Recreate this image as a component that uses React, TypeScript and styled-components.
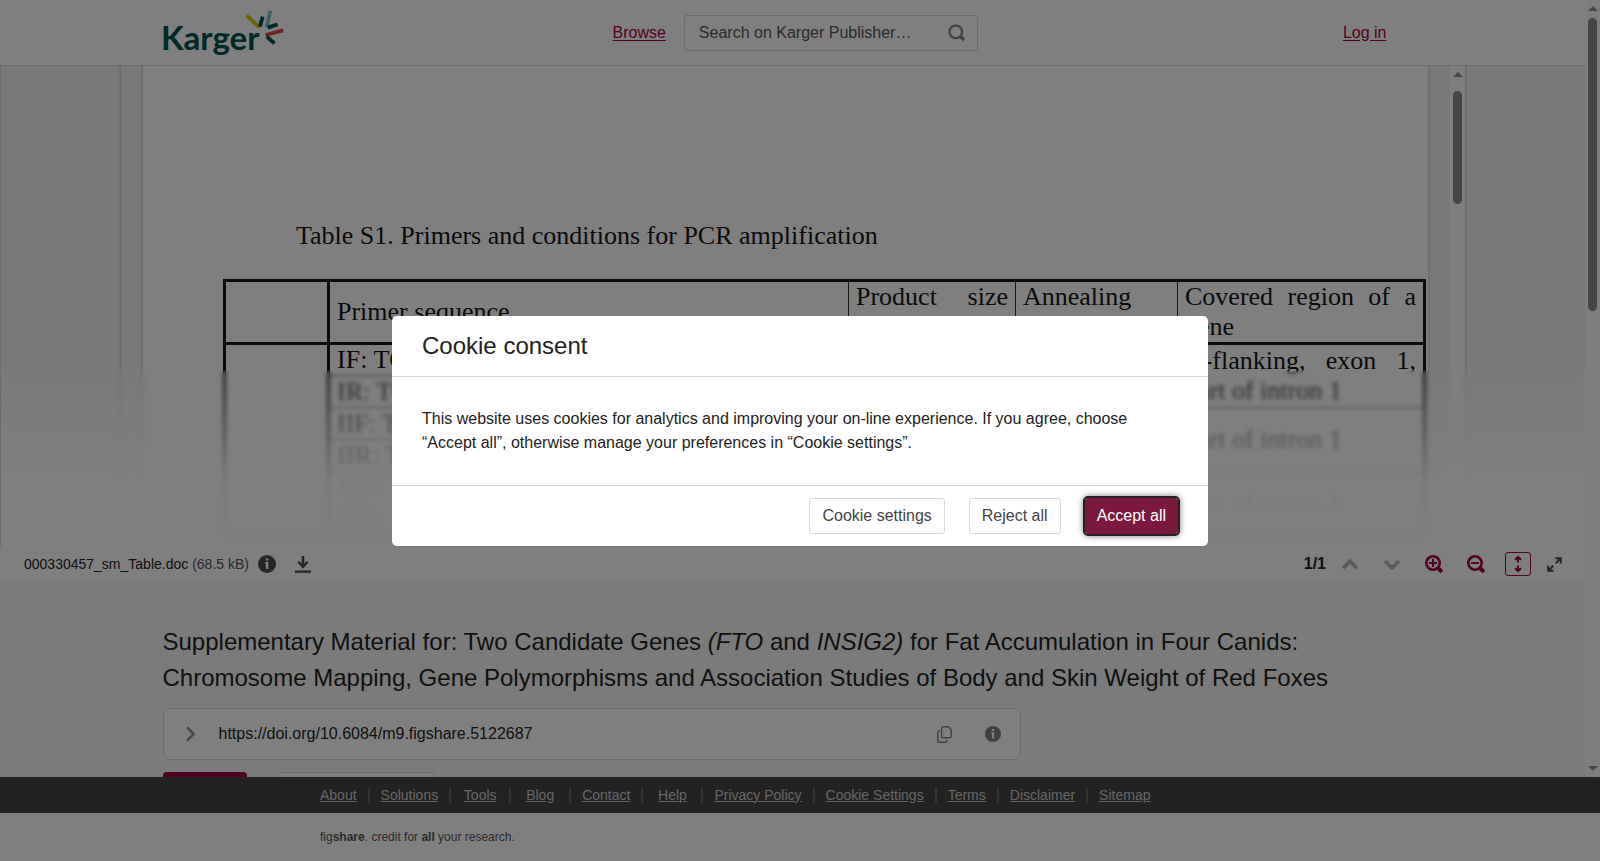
import React from "react";
import styled, { createGlobalStyle, css } from "styled-components";

const accent = "#a80044";

const GlobalStyle = createGlobalStyle`
  *, *::before, *::after { box-sizing: border-box; }
  body {
    margin: 0;
    background: #fff;
    color: #222;
    font: 16px/24px "Liberation Sans", Arial, sans-serif;
  }
  button, input { font: inherit; }
`;

const Page = styled.div`
  display: flex;
  flex-direction: column;
  height: 100vh;
  overflow: hidden;
`;

const ScrollRegion = styled.div`
  display: flex;
  flex: 1;
  min-height: 0;
`;

const Content = styled.div`
  flex: 1;
  min-width: 0;
  overflow: hidden;
  background: #f7f7f7;
`;

/* ---------- scrollbars ---------- */

const Track = styled.div<{ $gap: number }>`
  display: flex;
  flex-direction: column;
  align-items: center;
  gap: ${(p) => p.$gap}px;
  width: 15px;
  flex: none;
  padding: 6px 0;
  background: #fcfcfc;
`;

const Thumb = styled.div<{ $length: number }>`
  width: 9px;
  height: ${(p) => p.$length}px;
  border-radius: 5px;
  background: #8a8a8a;
`;

const Arrow = styled.div<{ $down?: boolean }>`
  border: 5px solid transparent;
  ${(p) =>
    p.$down
      ? css`
          margin-top: auto;
          border-top-color: #8a8a8a;
          border-bottom-width: 0;
        `
      : css`
          border-bottom-color: #8a8a8a;
          border-top-width: 0;
        `}
`;

function Scrollbar({ gap, length }: { gap: number; length: number }) {
  return (
    <Track $gap={gap} aria-hidden="true">
      <Arrow />
      <Thumb $length={length} />
      <Arrow $down />
    </Track>
  );
}

/* ---------- header ---------- */

const Header = styled.header`
  height: 66px;
  background: #fff;
  border-bottom: 1px solid #d8d8d8;
`;

const HeaderInner = styled.div`
  display: grid;
  grid-template-columns: 450px auto 1fr;
  align-items: center;
  max-width: 1260px;
  height: 65px;
  margin: 0 auto;
  padding-right: 36px;
`;

const HeaderMiddle = styled.div`
  display: flex;
  align-items: center;
  gap: 18px;
`;

const TextLink = styled.a`
  color: ${accent};
  text-underline-offset: 2px;
`;

const LoginLink = styled(TextLink)`
  justify-self: end;
`;

const SearchBox = styled.form`
  display: flex;
  align-items: center;
  width: 294px;
  height: 36px;
  padding: 0 12px 0 14px;
  border: 1px solid #d8d8d8;
  border-radius: 3px;
`;

const SearchInput = styled.input`
  flex: 1;
  min-width: 0;
  padding: 0;
  border: 0;
  outline: 0;
  background: none;
  color: #222;
  &::placeholder {
    color: #555;
    opacity: 1;
  }
`;

const IconButton = styled.button<{ $color?: string }>`
  display: flex;
  padding: 0;
  border: 0;
  background: none;
  color: ${(p) => p.$color ?? "#4a4a4a"};
`;

const LogoDrawing = styled.svg`
  overflow: visible;
`;

const LogoText = styled.text`
  font: 700 33px Lato, sans-serif;
  fill: #00544f;
`;

function Logo() {
  return (
    <LogoDrawing width="122" height="50" viewBox="0 0 122 50" role="img" aria-label="Karger">
      <LogoText x="-2" y="42">Karger</LogoText>
      <g fill="none" strokeWidth="3.8">
        <path stroke="#d9c800" d="M83.6 7.6 96.4 19.4" />
        <path stroke="#00544f" d="M99.8 8.6 96.8 18.6" />
        <path stroke="#82bac8" d="M107.2 2.800 103.800 19.400" />
        <path stroke="#00544f" d="M104.8 19.600 114.600 16.400" />
        <path stroke="#e0474c" d="M102.6 27 120.2 22.4" />
        <path stroke="#00544f" d="M103.800 28.600 111.400 35.400" />
      </g>
    </LogoDrawing>
  );
}

function SearchIcon() {
  return (
    <svg width="17" height="17" viewBox="0 0 17 17" fill="none" stroke="#808080" strokeWidth="2.2">
      <circle cx="7.8" cy="7.8" r="6.3" />
      <path d="m12 12 4 4" strokeWidth="3.2" />
    </svg>
  );
}

/* ---------- document viewer ---------- */

const Viewer = styled.section`
  position: relative;
  height: 480px;
  overflow: hidden;
  padding: 0 120px;
  border-left: 1px solid #d8d8d8;
  background: #f3f3f3;
`;

const Frame = styled.div`
  display: flex;
  height: 100%;
  box-shadow: 0 0 3px rgba(0, 0, 0, 0.3);
`;

const Sheet = styled.article`
  flex: 1;
  min-width: 0;
  margin: 0 22px;
  padding: 155px 0 0 80px;
  background: #fff;
  box-shadow: 0 0 3px rgba(0, 0, 0, 0.3);
  color: #151515;
  font: 26px/30px "Liberation Serif", "Times New Roman", serif;
`;

const Caption = styled.p`
  margin: 0 0 28px 73px;
`;

const Primers = styled.table`
  width: 1200px;
  border: 3px solid #151515;
  border-collapse: collapse;
  table-layout: fixed;
`;

const Cell = styled.td<{ $heavyTop?: boolean; $heavyLeft?: boolean; $heavyRight?: boolean }>`
  height: 32px;
  padding: 0 7px;
  border: 1px solid #333;
  ${(p) => p.$heavyTop && "border-top: 3px solid #151515;"}
  ${(p) => p.$heavyLeft && "border-left: 3px solid #151515;"}
  ${(p) => p.$heavyRight && "border-right: 3px solid #151515;"}
  text-align: justify;
`;

const HeadCell = styled(Cell).attrs({ as: "th", scope: "col" })`
  height: 60px;
  font-weight: 400;
`;

const Fade = styled.div`
  position: absolute;
  left: 0;
  right: 0;
  bottom: 0;
  height: 175px;
  backdrop-filter: blur(2px);
  background: linear-gradient(rgba(255, 255, 255, 0.1), rgba(255, 255, 255, 0.94) 65%, rgba(255, 255, 255, 0.98));
`;

const pairs = ["I", "II", "III"];

function DocumentTable() {
  return (
    <Primers>
      <colgroup>
        <col width="104" />
        <col width="520" />
        <col width="167" />
        <col width="162" />
        <col width="247" />
      </colgroup>
      <thead>
        <tr>
          <HeadCell />
          <HeadCell $heavyLeft>Primer sequence</HeadCell>
          <HeadCell>Product size (bp)</HeadCell>
          <HeadCell>Annealing temp.</HeadCell>
          <HeadCell>Covered region of a gene</HeadCell>
        </tr>
      </thead>
      <tbody>
        {pairs.map((n, i) => (
          <React.Fragment key={n}>
            <tr>
              {i === 0 && <Cell rowSpan={6} $heavyTop $heavyRight />}
              <Cell $heavyTop={i === 0}>{n}F: TCG</Cell>
              <Cell rowSpan={2} $heavyTop={i === 0} />
              <Cell rowSpan={2} $heavyTop={i === 0} />
              <Cell rowSpan={2} $heavyTop={i === 0}>
                {i === 0 ? "5′-flanking, exon 1, part of intron 1" : "part of intron 1"}
              </Cell>
            </tr>
            <tr>
              <Cell>{n}R: TCG</Cell>
            </tr>
          </React.Fragment>
        ))}
      </tbody>
    </Primers>
  );
}

/* ---------- viewer toolbar ---------- */

const Toolbar = styled.div`
  display: flex;
  align-items: center;
  justify-content: space-between;
  height: 36px;
  padding: 0 23px 0 24px;
  background: #fff;
`;

const FileInfo = styled.div`
  display: flex;
  align-items: center;
  font-size: 14px;
`;

const FileName = styled.span`
  margin-right: 9px;
`;

const FileSize = styled.span`
  color: #555;
`;

const FileActions = styled.div`
  display: flex;
  align-items: center;
  gap: 19px;
`;

const Pager = styled.div`
  display: flex;
  align-items: center;
  gap: 24px;
`;

const PageCount = styled.b`
  margin-right: -9px;
`;

const FitButton = styled(IconButton)`
  align-items: center;
  justify-content: center;
  width: 26px;
  height: 24px;
  margin-left: -4px;
  border: 1px solid ${accent};
  border-radius: 3px;
`;

const ExpandButton = styled(IconButton)`
  margin-left: -8px;
`;

function InfoIcon({ size, color }: { size: number; color: string }) {
  return (
    <svg width={size} height={size} viewBox="0 0 18 18">
      <circle cx="9" cy="9" r="9" fill={color} />
      <path fill="#fff" d="M7.8 3.4h2.6v2.2H7.8zM7 7h3.4v7H7.8V8.4H7z" />
    </svg>
  );
}

function DownloadIcon() {
  return (
    <svg width="16" height="18" viewBox="0 0 16 18" fill="currentColor">
      <path d="M6.700 1h2.600v7.600l2.600-2.600L13.600 7.600 8 13.800 2.400 7.600 4.100 6l2.600 2.600zM0 15.600h16v2.200H0z" />
    </svg>
  );
}

function ChevronIcon({ down }: { down?: boolean }) {
  return (
    <svg width="18" height="18" viewBox="0 0 18 18" fill="none" stroke="currentColor" strokeWidth="3.6">
      <path d={down ? "m2 6 7 7 7-7" : "m2 13.200 7-7 7 7"} />
    </svg>
  );
}

function ZoomIcon({ plus }: { plus?: boolean }) {
  return (
    <svg width="18" height="18" viewBox="0 0 18 18" fill="none" stroke="currentColor" strokeWidth="2.6">
      <circle cx="8" cy="8" r="6.700" />
      <path d="m13 13 4 4" strokeWidth="4" />
      <path d={plus ? "M4 8h8M8 4v8" : "M4 8h8"} strokeWidth="2" />
    </svg>
  );
}

function FitHeightIcon() {
  return (
    <svg width="8" height="18" viewBox="0 0 8 18" fill="none" stroke="currentColor" strokeWidth="2">
      <path d="M4 2v5.400M1 4.800l3-3 3 3M4 10.600V16M1 13.200l3 3 3-3" />
    </svg>
  );
}

function ExpandIcon() {
  return (
    <svg width="15" height="15" viewBox="0 0 15 15" fill="none" stroke="currentColor" strokeWidth="2">
      <path d="M8.400 1.200h5.400v5.400M13.400 1.600 8.800 6.200M6.600 13.800H1.200V8.400M1.600 13.400l4.600-4.600" />
    </svg>
  );
}

/* ---------- item details ---------- */

const Details = styled.main`
  max-width: 1260px;
  margin: 0 auto;
  padding-top: 42px;
`;

const Title = styled.h1`
  margin: 0 0 12px;
  font-size: 24px;
  line-height: 36px;
  font-weight: 400;
`;

const DoiBox = styled.div`
  display: flex;
  align-items: center;
  max-width: 858px;
  height: 52px;
  padding: 0 19px 0 20px;
  border: 1px solid #d8d8d8;
  border-radius: 6px;
  background: #fff;
`;

const DoiText = styled.span`
  flex: 1;
  margin-left: 21px;
`;

const DoiActions = styled.div`
  display: flex;
  align-items: center;
  gap: 33px;
`;

const ActionRow = styled.div`
  display: flex;
  gap: 30px;
  margin-top: 12px;
`;

const Button = styled.button<{ $width?: number; $primary?: boolean }>`
  height: 36px;
  ${(p) => p.$width && `width: ${p.$width}px;`}
  padding: 0 12px;
  border: 1px solid ${(p) => (p.$primary ? accent : "#d8d8d8")};
  border-radius: 3px;
  background: ${(p) => (p.$primary ? accent : "#fff")};
  color: ${(p) => (p.$primary ? "#fff" : "#444")};
  white-space: nowrap;
`;

const DownloadButton = styled(Button)`
  padding: 0 8px;
`;

function CaretIcon() {
  return (
    <svg width="14" height="18" viewBox="0 0 14 18" fill="none" stroke="currentColor" strokeWidth="2.4">
      <path d="m3 2.400 6.600 6.600L3 15.600" />
    </svg>
  );
}

function CopyIcon() {
  return (
    <svg width="15" height="17" viewBox="0 0 15 17" fill="none" stroke="currentColor" strokeWidth="1.400">
      <path d="M6.200.7h5L14.200 3.600v6.600q0 1.600-1.600 1.600H6.200q-1.600 0-1.600-1.600V2.300Q4.600.7 6.200.7z" />
      <path d="M3 4.600q-2.200 0-2.200 1.800v8q0 1.800 1.800 1.800h5.600q1.800 0 1.800-2.200" />
    </svg>
  );
}

/* ---------- footer ---------- */

const FooterBar = styled.nav`
  flex: none;
  background: #444;
`;

const FooterInner = styled.div`
  max-width: 960px;
  margin: 0 auto;
`;

const FooterLinks = styled.ul`
  display: flex;
  align-items: center;
  height: 36px;
  margin: 0;
  padding: 0;
  list-style: none;
  font-size: 14px;
  line-height: 15px;
`;

const FooterItem = styled.li`
  min-width: 60px;
  padding: 0 11px;
  text-align: center;
  white-space: nowrap;
  border-right: 2px solid #666;
  &:first-child {
    min-width: 0;
    padding-left: 0;
  }
  &:last-child {
    border-right: 0;
  }
`;

const FooterLink = styled.a`
  color: #ccc;
`;

const Credit = styled.footer`
  flex: none;
  height: 48px;
  background: #fff;
  color: #555;
  font-size: 12px;
  line-height: 48px;
`;

const footerLinks = [
  "About", "Solutions", "Tools", "Blog", "Contact", "Help",
  "Privacy Policy", "Cookie Settings", "Terms", "Disclaimer", "Sitemap",
];

/* ---------- cookie dialog ---------- */

const Backdrop = styled.div`
  position: fixed;
  inset: 0;
  display: flex;
  align-items: center;
  justify-content: center;
  background: rgba(0, 0, 0, 0.5);
`;

const Dialog = styled.div`
  width: 100%;
  max-width: 816px;
  border-radius: 5px;
  background: #fff;
`;

const DialogTitle = styled.h2`
  margin: 0;
  padding: 12px 30px;
  border-bottom: 1px solid #d8d8d8;
  font-size: 24px;
  line-height: 36px;
  font-weight: 400;
`;

const DialogBody = styled.p`
  margin: 0;
  padding: 30px;
`;

const DialogFooter = styled.div`
  display: flex;
  justify-content: flex-end;
  gap: 24px;
  padding: 12px 30px;
  border-top: 1px solid #d8d8d8;
`;

const AcceptButton = styled(Button)`
  padding: 0 11px;
  border-color: #7a183d;
  background: #7a183d;
  color: #fff;
  outline: 2px solid #222;
  outline-offset: 0;
  box-shadow: 0 0 6px 2px rgba(0, 0, 0, 0.5);
`;

export default function App() {
  return (
    <>
      <GlobalStyle />
      <Page>
        <ScrollRegion>
          <Content>
            <Header>
              <HeaderInner>
                <Logo />
                <HeaderMiddle>
                  <TextLink href="#browse">Browse</TextLink>
                  <SearchBox role="search">
                    <SearchInput aria-label="Search" placeholder="Search on Karger Publisher…" />
                    <IconButton type="submit" aria-label="Submit search">
                      <SearchIcon />
                    </IconButton>
                  </SearchBox>
                </HeaderMiddle>
                <LoginLink href="#login">Log in</LoginLink>
              </HeaderInner>
            </Header>

            <Viewer>
              <Frame>
                <Sheet>
                  <Caption>Table S1. Primers and conditions for PCR amplification</Caption>
                  <DocumentTable />
                </Sheet>
                <Scrollbar gap={14} length={113} />
              </Frame>
              <Fade />
            </Viewer>

            <Toolbar>
              <FileInfo>
                <FileName>
                  000330457_sm_Table.doc <FileSize>(68.5 kB)</FileSize>
                </FileName>
                <FileActions>
                  <IconButton aria-label="File details">
                    <InfoIcon size={18} color="#4a4a4a" />
                  </IconButton>
                  <IconButton aria-label="Download file">
                    <DownloadIcon />
                  </IconButton>
                </FileActions>
              </FileInfo>
              <Pager>
                <PageCount>1/1</PageCount>
                <IconButton aria-label="Previous page" $color="#b4b4b4">
                  <ChevronIcon />
                </IconButton>
                <IconButton aria-label="Next page" $color="#b4b4b4">
                  <ChevronIcon down />
                </IconButton>
                <IconButton aria-label="Zoom in" $color={accent}>
                  <ZoomIcon plus />
                </IconButton>
                <IconButton aria-label="Zoom out" $color={accent}>
                  <ZoomIcon />
                </IconButton>
                <FitButton aria-label="Fit height" $color={accent}>
                  <FitHeightIcon />
                </FitButton>
                <ExpandButton aria-label="Full screen">
                  <ExpandIcon />
                </ExpandButton>
              </Pager>
            </Toolbar>

            <Details>
              <Title>
                Supplementary Material for: Two Candidate Genes <i>(FTO</i> and <i>INSIG2)</i> for Fat
                Accumulation in Four Canids: Chromosome Mapping, Gene Polymorphisms and Association
                Studies of Body and Skin Weight of Red Foxes
              </Title>
              <DoiBox>
                <IconButton aria-label="Show citation" $color="#8a8a8a">
                  <CaretIcon />
                </IconButton>
                <DoiText>https://doi.org/10.6084/m9.figshare.5122687</DoiText>
                <DoiActions>
                  <IconButton aria-label="Copy DOI" $color="#808080">
                    <CopyIcon />
                  </IconButton>
                  <IconButton aria-label="About DOI">
                    <InfoIcon size={16} color="#808080" />
                  </IconButton>
                </DoiActions>
              </DoiBox>
              <ActionRow>
                <Button $primary $width={84}>Cite</Button>
                <DownloadButton $width={157}>Download (68.5 kB)</DownloadButton>
              </ActionRow>
            </Details>
          </Content>
          <Scrollbar gap={7} length={293} />
        </ScrollRegion>

        <FooterBar>
          <FooterInner>
            <FooterLinks>
              {footerLinks.map((label) => (
                <FooterItem key={label}>
                  <FooterLink href="#footer">{label}</FooterLink>
                </FooterItem>
              ))}
            </FooterLinks>
          </FooterInner>
        </FooterBar>
        <Credit>
          <FooterInner>
            fig<b>share</b>. credit for <b>all</b> your research.
          </FooterInner>
        </Credit>
      </Page>

      <Backdrop>
        <Dialog role="dialog" aria-modal="true" aria-labelledby="cookie-title">
          <DialogTitle id="cookie-title">Cookie consent</DialogTitle>
          <DialogBody>
            This website uses cookies for analytics and improving your on-line experience. If you
            agree, choose “Accept all”, otherwise manage your preferences in “Cookie settings”.
          </DialogBody>
          <DialogFooter>
            <Button>Cookie settings</Button>
            <Button>Reject all</Button>
            <AcceptButton>Accept all</AcceptButton>
          </DialogFooter>
        </Dialog>
      </Backdrop>
    </>
  );
}
